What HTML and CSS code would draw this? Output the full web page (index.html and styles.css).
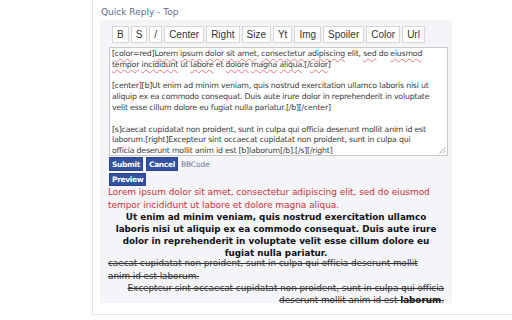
FILE: index.html
```html
<!DOCTYPE html>
<html>
<head>
<meta charset="utf-8">
<link rel="stylesheet" href="styles.css">
</head>
<body>
<div class="frame">
  <div class="title">Quick Reply - Top</div>
  <div class="panel">
    <div class="toolbar">
      <span class="tb">B</span><span class="tb">S</span><span class="tb">/</span><span class="tb">Center</span><span class="tb">Right</span><span class="tb">Size</span><span class="tb">Yt</span><span class="tb">Img</span><span class="tb">Spoiler</span><span class="tb">Color</span><span class="tb">Url</span>
    </div>
    <div class="editor">
      <div class="ln">[<u>color</u>=red]<u>Lorem</u> <u>ipsum</u> <u>dolor</u> <u>sit</u> <u>amet</u>, <u>consectetur</u> <u>adipiscing</u> elit, <u>sed</u> do <u>eiusmod</u></div>
      <div class="ln"><u>tempor</u> <u>incididunt</u> ut <u>labore</u> et <u>dolore</u> <u>magna</u> <u>aliqua</u>.[/<u>color</u>]</div>
      <div class="ln">&nbsp;</div>
      <div class="ln">[center][b]Ut enim ad minim veniam, quis nostrud exercitation ullamco laboris nisi ut</div>
      <div class="ln">aliquip ex ea commodo consequat. Duis aute irure dolor in reprehenderit in voluptate</div>
      <div class="ln">velit esse cillum dolore eu fugiat nulla pariatur.[/b][/center]</div>
      <div class="ln">&nbsp;</div>
      <div class="ln">[s]caecat cupidatat non proident, sunt in culpa qui officia deserunt mollit anim id est</div>
      <div class="ln">laborum.[right]Excepteur sint occaecat cupidatat non proident, sunt in culpa qui</div>
      <div class="ln">officia deserunt mollit anim id est [b]laborum[/b].[/s][/right]</div>
      <svg class="grip" width="8" height="8" viewBox="0 0 8 8"><path d="M7.5 1.5 L1.5 7.5 M7.5 4.5 L4.5 7.5" stroke="#a8a8a8" stroke-width="1"/></svg>
    </div>
    <div class="actions">
      <span class="btn">Submit</span><span class="btn">Cancel</span><span class="bbcode">BBCode</span>
    </div>
    <div class="actions second">
      <span class="btn">Preview</span>
    </div>
    <div class="preview">
      <div class="red">Lorem ipsum dolor sit amet, consectetur adipiscing elit, sed do eiusmod<br>tempor incididunt ut labore et dolore magna aliqua.</div>
      <div class="center">Ut enim ad minim veniam, quis nostrud exercitation ullamco<br>laboris nisi ut aliquip ex ea commodo consequat. Duis aute irure<br>dolor in reprehenderit in voluptate velit esse cillum dolore eu<br>fugiat nulla pariatur.</div>
      <div class="strike">caecat cupidatat non proident, sunt in culpa qui officia deserunt mollit<br>anim id est laborum.</div>
      <div class="strike right">Excepteur sint occaecat cupidatat non proident, sunt in culpa qui officia<br>deserunt mollit anim id est <b>laborum</b>.</div>
    </div>
  </div>
</div>
</body>
</html>
```

FILE: styles.css
```css
html, body {
  margin: 0;
  padding: 0;
  background: #ffffff;
}
body {
  font-family: "DejaVu Sans", sans-serif;
  overflow: hidden;
}
.frame {
  box-sizing: border-box;
  margin-left: 92px;
  width: 420px;
  height: 315px;
  border-left: 1px solid #e4e4e4;
  border-bottom: 1px solid #e4e4e4;
  padding-top: 6px;
}
.title {
  margin-left: 8px;
  font-size: 9px;
  line-height: 12px;
  color: #5e6d8c;
}
.panel {
  box-sizing: border-box;
  margin-left: 7px;
  margin-top: 2px;
  width: 352px;
  height: 283px;
  background: #f3f5f8;
  padding: 6px 0 0 9px;
}
.toolbar {
  display: flex;
  gap: 2px;
  padding-left: 3px;
  height: 17px;
}
.tb {
  box-sizing: border-box;
  height: 17px;
  line-height: 15px;
  padding: 0 4px;
  border: 1px solid #d6d6d6;
  background: #ffffff;
  font-family: "Liberation Sans", Arial, sans-serif;
  font-size: 10px;
  color: #333333;
}
.editor {
  position: relative;
  box-sizing: border-box;
  margin-top: 4px;
  width: 339px;
  height: 109px;
  background: #ffffff;
  border: 1px solid #c9c9c9;
  padding: 1px 0 0 2px;
  font-size: 7.8px;
  line-height: 10.8px;
  letter-spacing: -0.2px;
  color: #3a3a3a;
  white-space: nowrap;
  overflow: hidden;
}
.editor u {
  text-decoration: underline wavy #e37a7a;
  text-decoration-thickness: 0.5px;
  text-underline-offset: 1.5px;
}
.grip {
  position: absolute;
  right: 1px;
  bottom: 1px;
}
.actions {
  display: flex;
  align-items: center;
  gap: 3px;
  margin-top: 1px;
  height: 14px;
}
.actions.second {
  margin-top: 2px;
  height: 13px;
}
.btn {
  box-sizing: border-box;
  height: 100%;
  padding: 0 2px;
  display: flex;
  align-items: center;
  background: #34519f;
  border: 1px solid #2b4591;
  color: #ffffff;
  font-weight: bold;
  font-size: 7.5px;
  letter-spacing: -0.35px;
}
.bbcode {
  font-size: 7.5px;
  color: #6f7a94;
  letter-spacing: -0.1px;
}
.preview {
  margin-left: -1px;
  width: 336px;
  white-space: nowrap;
}
.red {
  color: #c9343a;
  font-size: 9px;
  line-height: 12.5px;
  letter-spacing: -0.05px;
}
.center {
  margin-top: 0;
  text-align: center;
  font-weight: bold;
  font-size: 8.8px;
  line-height: 12px;
  color: #111111;
}
.strike {
  text-decoration: line-through;
  color: #333333;
  font-size: 8.9px;
  line-height: 12.5px;
  letter-spacing: -0.05px;
  margin-top: -2px;
}
.strike.right {
  text-align: right;
  line-height: 12px;
  margin-top: 0;
}
.strike b {
  color: #111111;
}
```
